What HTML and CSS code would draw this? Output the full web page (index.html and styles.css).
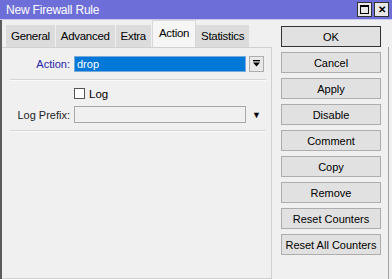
FILE: index.html
```html
<!DOCTYPE html>
<html lang="en">
<head>
  <meta charset="UTF-8" />
  <title>New Firewall Rule</title>
  <link rel="stylesheet" href="styles.css">
</head>
<body>
  <div class="window">
    <div class="titlebar">
      <span class="title">New Firewall Rule</span>
      <div class="winbtns">
        <span class="winbtn"><span class="maxbox"></span></span>
        <span class="winbtn close">&#x2715;</span>
      </div>
    </div>

    <div class="body">
      <div class="main">
        <div class="tabs">
          <span class="tab">General</span>
          <span class="tab">Advanced</span>
          <span class="tab">Extra</span>
          <span class="tab active">Action</span>
          <span class="tab">Statistics</span>
        </div>
        <div class="panel">
          <div class="row">
            <label class="lbl blue">Action:</label>
            <div class="field selected">drop</div>
            <span class="dropbtn">
              <svg width="9" height="9" viewBox="0 0 9 9"><rect x="1" y="1" width="7" height="1.3" fill="#000"/><path d="M1 3.5h7L4.5 7.5z" fill="#000"/></svg>
            </span>
          </div>
          <div class="sep"></div>
          <div class="row check-row">
            <span class="lbl"></span>
            <span class="checkbox"></span>
            <span class="check-text">Log</span>
          </div>
          <div class="row">
            <label class="lbl">Log Prefix:</label>
            <div class="field"></div>
            <span class="arrow">&#9660;</span>
          </div>
          <div class="sep last"></div>
        </div>
      </div>

      <div class="side">
        <button class="btn default">OK</button>
        <button class="btn">Cancel</button>
        <button class="btn">Apply</button>
        <button class="btn">Disable</button>
        <button class="btn">Comment</button>
        <button class="btn">Copy</button>
        <button class="btn">Remove</button>
        <button class="btn">Reset Counters</button>
        <button class="btn">Reset All Counters</button>
      </div>
    </div>
  </div>
</body>
</html>
```

FILE: styles.css
```css
body {
  margin: 0;
  font-family: 'Liberation Sans', Arial, sans-serif;
  font-size: 11px;
  color: #000;
  background: #f0f0f0;
}

.window {
  width: 392px;
  height: 279px;
  overflow: hidden;
  background: #f0f0f0;
}

.titlebar {
  height: 20px;
  background: #6e6ed8;
  color: white;
  display: flex;
  align-items: center;
  justify-content: space-between;
  padding: 0 3px 0 6px;
  border-bottom: 1px solid #c9c9ee;
  box-sizing: border-box;
}

.title {
  font-size: 12px;
  letter-spacing: -0.2px;
}

.winbtns {
  display: flex;
  gap: 2px;
}

.winbtn {
  width: 15px;
  height: 15px;
  background: #e8e8e8;
  border: 1px solid #333;
  box-sizing: border-box;
  display: flex;
  align-items: center;
  justify-content: center;
  color: #000;
  font-size: 10px;
  font-weight: bold;
}

.maxbox {
  width: 9px;
  height: 9px;
  border: 1px solid #000;
  border-top-width: 2px;
  box-sizing: border-box;
}

.body {
  display: flex;
  border-left: 2px solid #5c5c5c;
}

.main {
  width: 270px;
  display: flex;
  flex-direction: column;
}

.tabs {
  display: flex;
  align-items: flex-end;
  height: 27px;
  padding-left: 4px;
}

.tab {
  height: 22px;
  line-height: 22px;
  padding: 0 5px;
  background: #dcdcdc;
  border-right: 1px solid #f0f0f0;
  font-size: 11.5px;
  letter-spacing: -0.3px;
}

.tab.active {
  height: 26px;
  line-height: 25px;
  background: #f6f6f6;
  border: 1px solid #d8d8d8;
  border-bottom: none;
  padding: 0 6px;
}

.panel {
  height: 232px;
  background: #f0f0f0;
  border: 1px solid #d0d0d0;
  border-left: none;
  box-sizing: border-box;
  padding: 7px 6px 0 8px;
}

.row {
  display: flex;
  align-items: center;
  height: 17px;
}

.lbl {
  width: 60px;
  text-align: right;
  padding-right: 4px;
  flex-shrink: 0;
  color: #222;
}

.lbl.blue {
  color: #2424a8;
}

.field {
  width: 172px;
  height: 17px;
  box-sizing: border-box;
  border: 1px solid #a8a8a8;
  background: #f0f0f0;
  padding-left: 2px;
  line-height: 15px;
}

.field.selected {
  height: 16px;
  background: #0078d7;
  color: white;
  border-color: #7aa8d8;
}

.dropbtn {
  width: 13px;
  height: 14px;
  margin-left: 3px;
  border: 1px solid #adadad;
  background: #e8e8e8;
  display: flex;
  align-items: center;
  justify-content: center;
}

.arrow {
  font-size: 9px;
  margin-left: 6px;
}

.sep {
  height: 1px;
  background: #d6d6d6;
  border-bottom: 1px solid #fafafa;
  margin: 7px 0 4px 0;
  width: 256px;
}

.sep.last {
  margin-top: 7px;
}

.check-row {
  margin-bottom: 4px;
}

.checkbox {
  width: 9px;
  height: 9px;
  border: 1px solid #555;
  background: white;
}

.check-text {
  margin-left: 4px;
  font-size: 11.5px;
}

.side {
  flex: 1;
  display: flex;
  flex-direction: column;
  gap: 5px;
  padding: 0 7px 0 9px;
  margin-top: 27px;
  height: 232px;
  box-sizing: border-box;
  border-right: 1px solid #a0a0a0;
  margin-right: 3px;
}

.btn {
  height: 21px;
  width: 100px;
  background: #e1e1e1;
  border: 1px solid #adadad;
  font-family: inherit;
  font-size: 11px;
  padding: 0;
  color: #000;
}

.btn.default {
  border: 1px solid #333;
  margin-top: -21px;
}
```
